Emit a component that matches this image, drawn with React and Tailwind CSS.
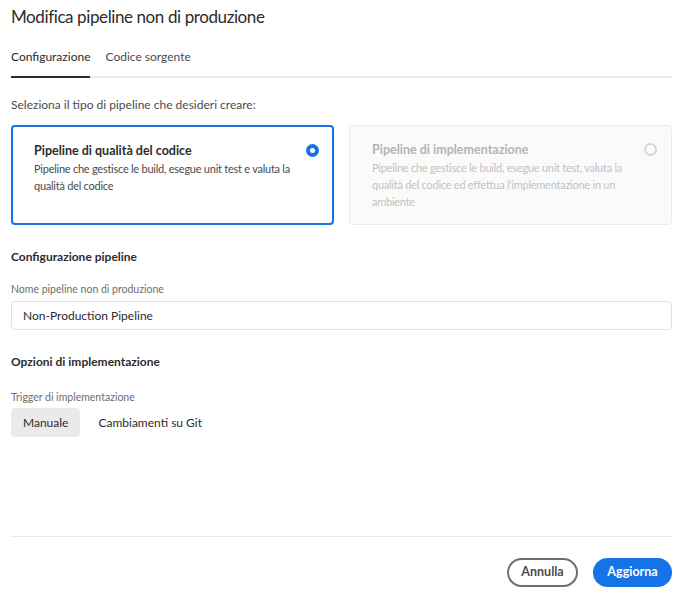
export default function App() {
  return (
    <div className="w-[688px] h-[598px] bg-white text-[#2c2c2c] pl-[11px] pr-[16px] pt-[5px] pb-[11px] flex flex-col" style={{ fontFamily: 'Lato, "Noto Sans", sans-serif' }}>
      <h1 className="text-[17px] leading-[24px] tracking-[-0.4px] font-normal">Modifica pipeline non di produzione</h1>

      {/* Tabs */}
      <div className="mt-[20px] flex border-b-2 border-[#eaeaea] text-[12px] leading-[16px]">
        <div className="pb-[11px] -mb-[2px] border-b-2 border-[#2c2c2c] text-[#2c2c2c]">Configurazione</div>
        <div className="pb-[11px] ml-[15px] text-[#4b4b4b]">Codice sorgente</div>
      </div>

      <p className="mt-[19px] text-[12px] leading-[16px] text-[#4b4b4b]">Seleziona il tipo di pipeline che desideri creare:</p>

      <div className="mt-[12px] grid grid-cols-2 gap-[15px]">
        <div className="h-[100px] rounded-[4px] border-2 border-[#1473e6] pl-[21px] pr-[13px] pt-[15px] flex">
          <div className="flex-1">
            <div className="text-[12.5px] font-bold leading-[18px]">Pipeline di qualità del codice</div>
            <div className="text-[11px] leading-[17px] tracking-[-0.25px] text-[#4b4b4b]">Pipeline che gestisce le build, esegue unit test e valuta la qualità del codice</div>
          </div>
          <div className="mt-[2px] w-[13px] h-[13px] rounded-full bg-[#1473e6] flex items-center justify-center">
            <div className="w-[5px] h-[5px] rounded-full bg-white" />
          </div>
        </div>
        <div className="h-[100px] rounded-[4px] border border-[#ebebeb] bg-[#fafafa] pl-[22px] pr-[14px] pt-[15px] flex">
          <div className="flex-1">
            <div className="text-[12.5px] font-bold leading-[18px] text-[#b3b3b3]">Pipeline di implementazione</div>
            <div className="text-[11px] leading-[17px] tracking-[-0.25px] text-[#c2c2c2] pr-[8px]">Pipeline che gestisce le build, esegue unit test, valuta la qualità del codice ed effettua l'implementazione in un ambiente</div>
          </div>
          <div className="mt-[2px] w-[13px] h-[13px] rounded-full border-2 border-[#d5d5d5]" />
        </div>
      </div>

      <h2 className="mt-[24px] text-[12px] leading-[16px] font-bold">Configurazione pipeline</h2>
      <label className="mt-[17px] text-[10.5px] leading-[14px] text-[#6e6e6e]">Nome pipeline non di produzione</label>
      <div className="mt-[5px] h-[29px] rounded-[4px] border border-[#e1e1e1] px-[11px] flex items-center text-[12px] text-[#2c2c2c]">Non-Production Pipeline</div>

      <h2 className="mt-[24px] text-[12px] leading-[16px] font-bold">Opzioni di implementazione</h2>
      <label className="mt-[20px] text-[10.5px] leading-[14px] text-[#6e6e6e]">Trigger di implementazione</label>
      <div className="mt-[4px] flex items-center text-[12px]">
        <div className="h-[29px] px-[12px] rounded-[4px] bg-[#eaeaea] flex items-center text-[#2c2c2c]">Manuale</div>
        <div className="ml-[18px] text-[#2c2c2c]">Cambiamenti su Git</div>
      </div>

      <div className="mt-auto mb-[21px] border-t border-[#eaeaea]" />
      <div className="flex justify-end gap-[15px] text-[12.5px] font-bold">
        <button className="h-[29px] w-[71px] rounded-full border-2 border-[#6e6e6e] text-[#4b4b4b]">Annulla</button>
        <button className="h-[29px] w-[79px] rounded-full bg-[#1473e6] text-white">Aggiorna</button>
      </div>
    </div>
  );
}
